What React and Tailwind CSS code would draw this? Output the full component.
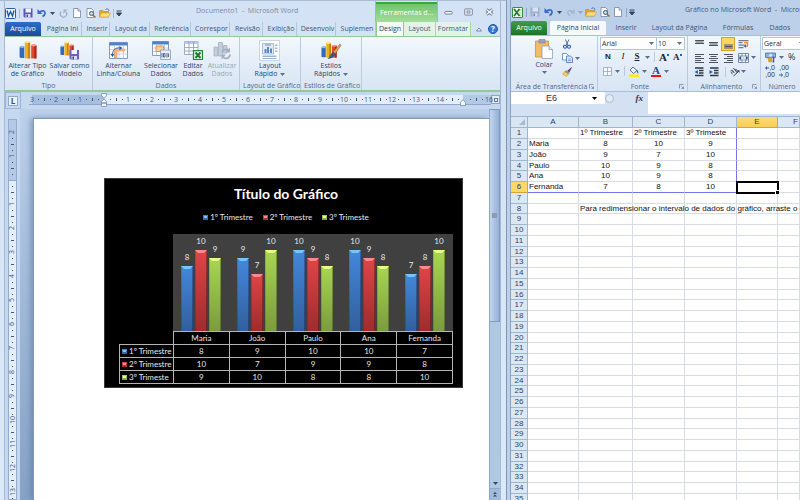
import clsx from 'clsx';

const WORD_TABS = [
  ['Página Ini', 'w-[41px]'],
  ['Inserir', 'w-[28px]'],
  ['Layout da', 'w-[40px]'],
  ['Referência', 'w-[41px]'],
  ['Correspor', 'w-[39px]'],
  ['Revisão', 'w-[33px]'],
  ['Exibição', 'w-[34px]'],
  ['Desenvolv', 'w-[39px]'],
  ['Suplemen', 'w-[40px]'],
];

const EXCEL_TABS = [
  ['Inserir', 'w-[36px]'],
  ['Layout da Página', 'w-[71px]'],
  ['Fórmulas', 'w-[46px]'],
  ['Dados', 'w-[38px]'],
];

const SERIES = [
  { name: '1º Trimestre', bar: 'bg-linear-to-b from-[#4488dd] to-[#315f9d]', tip: 'bg-[#7cc0ff]' },
  { name: '2º Trimestre', bar: 'bg-linear-to-b from-[#e04545] to-[#9d2d2d]', tip: 'bg-[#ff8a8a]' },
  { name: '3º Trimeste', bar: 'bg-linear-to-b from-[#a9d653] to-[#7b9c3b]', tip: 'bg-[#e6ff86]' },
];

const SCORES = [
  { name: 'Maria', values: [8, 10, 9] },
  { name: 'João', values: [9, 7, 10] },
  { name: 'Paulo', values: [10, 9, 8] },
  { name: 'Ana', values: [10, 9, 8] },
  { name: 'Fernanda', values: [7, 8, 10] },
];

const COLUMNS = ['A', 'B', 'C', 'D', 'E', 'F'];
const ROWS = Array.from({ length: 36 }, (_, i) => i + 1);

/* ---------- small icons ---------- */

function Caret({ className = 'text-[#3c4c63]' }) {
  return (
    <svg viewBox="0 0 5 3" className={clsx('h-[3px] w-[5px] shrink-0', className)}>
      <path d="M0 0h5L2.500 3z" fill="currentColor" />
    </svg>
  );
}

function WordLogo() {
  return (
    <svg viewBox="0 0 22 22" className="size-[11px]">
      <rect x="1" y="1" width="20" height="20" rx="2" fill="#eaf2fc" stroke="#2a5da8" strokeWidth="2" />
      <path d="M4 5l3 11 4-9 4 9 3-11" fill="none" stroke="#1f52a0" strokeWidth="2.600" />
    </svg>
  );
}

function ExcelLogo() {
  return (
    <svg viewBox="0 0 22 22" className="size-[11px]">
      <rect x="1" y="1" width="20" height="20" rx="1" fill="#f2faf0" stroke="#3b8d3f" strokeWidth="2" />
      <path d="M14 4h5v4h-5zM14 10h5v3h-5zM14 15h5v3h-5z" fill="#b8ddb4" />
      <path d="M4 4l11 14M15 4L4 18" stroke="#1d7a2c" strokeWidth="3.400" />
    </svg>
  );
}

function SaveIcon({ faded }) {
  return (
    <svg viewBox="0 0 20 20" className={clsx('size-[10px]', faded && 'opacity-60')}>
      <path d="M1 1h18v18H3l-2-2z" fill={faded ? '#8a9cbd' : '#5b55b8'} />
      <path d="M5 1h11v8H5z" fill="#eef3fb" />
      <path d="M5 12h10v7H5z" fill="#d5def0" />
      <path d="M7 13h3v5H7z" fill="#44508f" />
    </svg>
  );
}

function UndoIcon() {
  return (
    <svg viewBox="0 0 20 20" className="size-[10px]">
      <path d="M6 8c6-5 11-1 10 3-.5 3-3 5-5 6" fill="none" stroke="#3a69c4" strokeWidth="3.400" />
      <path d="M1 2v10h10z" fill="#3a69c4" />
    </svg>
  );
}

function RepeatIcon() {
  return (
    <svg viewBox="0 0 20 20" className="size-[9px]">
      <path d="M5 6a7 7 0 1 0 10 0" fill="none" stroke="#a3b1c5" strokeWidth="3" />
      <path d="M19 1h-9v9z" fill="#a3b1c5" />
    </svg>
  );
}

function RedoIcon() {
  return (
    <svg viewBox="0 0 20 20" className="size-[9px]">
      <path d="M14 8C8 3 3 7 4 11c.5 3 3 5 5 6" fill="none" stroke="#a3b4cd" strokeWidth="3" />
      <path d="M19 2v10H9z" fill="#a3b4cd" />
    </svg>
  );
}

function PageIcon() {
  return (
    <svg viewBox="0 0 16 20" className="h-[10px] w-[8px]">
      <path d="M1 1h9l5 5v13H1z" fill="#fff" stroke="#6f7f99" strokeWidth="1.500" />
      <path d="M10 1v5h5" fill="#dce5f2" stroke="#6f7f99" strokeWidth="1.500" />
    </svg>
  );
}

function PreviewIcon() {
  return (
    <svg viewBox="0 0 20 20" className="size-[10px]">
      <path d="M2 1h9l4 4v14H2z" fill="#fff" stroke="#6f7f99" strokeWidth="1.500" />
      <circle cx="11" cy="11" r="4" fill="#b9dcf5" stroke="#47566e" strokeWidth="2" />
      <path d="M14 14l5 5" stroke="#a96b2a" strokeWidth="3" />
    </svg>
  );
}

function FolderIcon() {
  return (
    <svg viewBox="0 0 24 20" className="h-[10px] w-[12px]">
      <path d="M1 5h7l2 2h9v11H1z" fill="#e0a42e" stroke="#b57f22" />
      <path d="M5 10h18l-4 8H1z" fill="#ffdc7a" stroke="#c8922e" />
      <path d="M13 3c4-3 7 0 7 3" fill="none" stroke="#3c70c0" strokeWidth="2" />
    </svg>
  );
}

function QatMore() {
  return (
    <svg viewBox="0 0 6 7" className="h-[7px] w-[6px]">
      <path d="M0.500 1h5M0.500 3h5L3 6z" fill="#33445c" stroke="#33445c" />
    </svg>
  );
}

function ToolButton({ label, className, children }) {
  return (
    <button type="button" aria-label={label} className={clsx('flex shrink-0 items-center justify-center', className)}>
      {children}
    </button>
  );
}

/* ---------- ribbon drawings ---------- */

function Columns3D() {
  return (
    <>
      <path d="M1 14l3-2h6v22H4l-3-1z" fill="#2f6cc0" />
      <ellipse cx="5.500" cy="13" rx="4.500" ry="2" fill="#8dbaf0" />
      <path d="M11 4h10v31H11z" fill="#f0b01e" />
      <path d="M17 4h4v31h-4z" fill="#c9820f" />
      <ellipse cx="16" cy="4" rx="5" ry="2.200" fill="#ffe48a" />
      <path d="M23 10h10v25H23z" fill="#e2492c" />
      <path d="M29 10h4v25h-4z" fill="#a92a18" />
      <ellipse cx="28" cy="10" rx="5" ry="2.200" fill="#ff9b80" />
    </>
  );
}

function ChartTypeIcon() {
  return (
    <svg viewBox="0 0 34 38" className="h-[20px] w-[18px]">
      <Columns3D />
    </svg>
  );
}

function SaveTemplateIcon() {
  return (
    <svg viewBox="0 0 40 38" className="h-[19px] w-[20px]">
      <g transform="scale(.82)">
        <Columns3D />
      </g>
      <path d="M19 18h19v19H21l-2-2z" fill="#6b62bd" />
      <path d="M23 18h11v8H23z" fill="#f2f5fb" />
      <path d="M23 30h11v7H23z" fill="#d5dcee" />
      <path d="M25 31h3v6h-3z" fill="#45458f" />
    </svg>
  );
}

function SwitchRowIcon() {
  return (
    <svg viewBox="0 0 38 34" className="h-[17px] w-[19px]">
      <path d="M1 1h36v32H1z" fill="#fff" stroke="#7f9cc4" strokeWidth="2" />
      <path d="M1 1h36v6H1z" fill="#4f82cc" />
      <path d="M2 15h34M2 24h34M11 7v25M20 7v25M29 7v25" stroke="#b5c8e2" strokeWidth="1.500" />
      <path d="M11 14h20v4H16v14h-5z" fill="#f9b77c" stroke="#e98b3c" />
      <path d="M7 26c0-10 5-15 15-14" fill="none" stroke="#2c5ba6" strokeWidth="2" />
      <path d="M21 8l6 4-6 4zM3 24h8l-4 6z" fill="#2c5ba6" />
    </svg>
  );
}

function SelectDataIcon() {
  return (
    <svg viewBox="0 0 38 38" className="size-[19px]">
      <path d="M1 1h32v28H1z" fill="#fff" stroke="#7f9cc4" strokeWidth="2" />
      <path d="M1 1h32v6H1z" fill="#4f82cc" />
      <path d="M2 14h30M2 21h30M9 8v20M17 8v20M25 8v20" stroke="#a9bfdd" strokeWidth="1.500" />
      <path d="M8 10h15v11H8z" fill="#fbd0a8" stroke="#ea8d3c" strokeWidth="2" />
      <path d="M17 18h20v19H17z" fill="#e9eff8" stroke="#7f93b3" strokeWidth="1.500" />
      <path d="M20 24v9M23 25h3v7h-3zM30 24v9M33 25v7" fill="none" stroke="#54698c" strokeWidth="2" />
    </svg>
  );
}

function EditDataIcon() {
  return (
    <svg viewBox="0 0 38 38" className="size-[19px]">
      <path d="M1 1h27v26H1z" fill="#fff" stroke="#7d92b2" strokeWidth="1.500" />
      <path d="M1 1h27v5H1z" fill="#b9cae2" />
      <path d="M1 13h27M1 20h27M10 1v26M19 1v26" stroke="#8397b5" strokeWidth="1.500" />
      <path d="M19 19h18v18H19z" fill="#eaf6e6" stroke="#2c8139" strokeWidth="2.500" />
      <path d="M23 23l10 11M33 23L23 34" stroke="#1d7a2c" strokeWidth="4" />
    </svg>
  );
}

function RefreshDataIcon() {
  return (
    <svg viewBox="0 0 38 38" className="size-[19px]">
      <path d="M2 12h7v18H2zM11 3h8v27h-8zM21 9h7v15h-7z" fill="#c5cedb" stroke="#a3afc0" strokeWidth="1.500" />
      <path d="M18 22a8 8 0 0 1 13-3M34 27a8 8 0 0 1-14 5" fill="none" stroke="#a3afc0" strokeWidth="3.500" />
      <path d="M34 13v10H24zM17 37V27h9z" fill="#a3afc0" />
    </svg>
  );
}

function QuickLayoutIcon() {
  return (
    <svg viewBox="0 0 42 42" className="size-[21px]">
      <path d="M1 1h40v40H1z" fill="#fff" stroke="#b8c9e0" strokeWidth="1.500" />
      <path d="M7 7h22v21H7z" fill="#e4ecf8" stroke="#8ea8d0" strokeWidth="1.500" />
      <path d="M12 9h12v2H12z" fill="#6a8cc2" />
      <path d="M11 18h4v8h-4zM16 14h4v12h-4zM22 17h4v9h-4z" fill="#5d86c5" />
      <path d="M32 9h5v3h-5zM32 15h5v3h-5zM32 21h5v3h-5zM7 31h28v3H7zM7 36h28v2H7z" fill="#9db4d8" />
    </svg>
  );
}

function QuickStylesIcon() {
  return (
    <svg viewBox="0 0 42 38" className="h-[19px] w-[21px]">
      <g transform="scale(.95)">
        <Columns3D />
      </g>
      <path d="M38 6L24 22l4 4L40 9z" fill="#d9a25c" stroke="#8c5a24" />
      <path d="M24 21l5 5-4 5c-4 4-9 5-12 4 5-3 6-9 11-14z" fill="#3e567e" />
    </svg>
  );
}

function PasteIcon() {
  return (
    <svg viewBox="0 0 36 40" className="h-[20px] w-[18px]">
      <path d="M1 4h26v32H1z" fill="#f2bd62" stroke="#c98f36" strokeWidth="1.500" />
      <path d="M8 1h12v7H8z" fill="#9aa5b5" stroke="#66748a" />
      <path d="M14 14h14l7 7v18H14z" fill="#fff" stroke="#8a98b0" strokeWidth="1.500" />
      <path d="M28 14v7h7" fill="#dce5f2" stroke="#8a98b0" strokeWidth="1.500" />
    </svg>
  );
}

function CutIcon() {
  return (
    <svg viewBox="0 0 16 20" className="h-[10px] w-[8px]">
      <path d="M5 1l5 12M12 1L6 13" stroke="#5b6f8f" strokeWidth="2" />
      <circle cx="4" cy="15.500" r="3" fill="none" stroke="#2c5cb0" strokeWidth="2.200" />
      <circle cx="12" cy="15.500" r="3" fill="none" stroke="#2c5cb0" strokeWidth="2.200" />
    </svg>
  );
}

function CopyIcon() {
  return (
    <svg viewBox="0 0 22 20" className="h-[10px] w-[11px]">
      <path d="M1 1h8l4 4v9H1z" fill="#fff" stroke="#4d77bb" strokeWidth="1.500" />
      <path d="M9 6h8l4 4v9H9z" fill="#dbe8fa" stroke="#3e6ab3" strokeWidth="1.500" />
      <path d="M12 12h6M12 15h6" stroke="#3e6ab3" />
    </svg>
  );
}

function BrushIcon() {
  return (
    <svg viewBox="0 0 20 20" className="size-[10px]">
      <path d="M19 1l-8 7 3 3z" fill="#5a4a78" stroke="#5a4a78" strokeWidth="1.500" />
      <path d="M9 6l6 6-3 3-7-5z" fill="#8a93a5" />
      <path d="M5 9l8 6-4 4-8-5z" fill="#f6cf5a" stroke="#c29022" />
    </svg>
  );
}

function LinesIcon({ rows }) {
  return (
    <svg viewBox="0 0 18 20" className="h-[10px] w-[9px]">
      {rows.map(([x, y, w]) => (
        <path key={y} d={`M${x} ${y}h${w}`} stroke="#4d545e" strokeWidth="2" />
      ))}
    </svg>
  );
}

const VALIGN_TOP = [[0, 3, 18], [1, 6, 16], [0, 9, 18]];
const VALIGN_MID = [[0, 7, 18], [1, 10, 16], [0, 13, 18]];
const VALIGN_BOTTOM = [[0, 12, 18], [1, 15, 16], [0, 18, 18]];
const ALIGN_LEFT = [[0, 3, 18], [0, 7, 12], [0, 11, 18], [0, 15, 12], [0, 19, 18]];
const ALIGN_CENTER = [[0, 3, 18], [3, 7, 12], [0, 11, 18], [3, 15, 12], [0, 19, 18]];
const ALIGN_RIGHT = [[0, 3, 18], [6, 7, 12], [0, 11, 18], [6, 15, 12], [0, 19, 18]];

function WrapIcon() {
  return (
    <svg viewBox="0 0 22 20" className="h-[10px] w-[11px]">
      <path d="M1 3h20M1 7h8M1 12h12M1 17h10" stroke="#6c7a90" strokeWidth="2.500" />
      <path d="M12 7h7v7h-5" fill="none" stroke="#d98a3d" strokeWidth="2.500" />
      <path d="M16 10v8l-5-4z" fill="#3a69c4" />
    </svg>
  );
}

function MergeIcon() {
  return (
    <svg viewBox="0 0 22 20" className="h-[10px] w-[11px]">
      <path d="M1 1h20v18H1zM1 6h20M1 14h20M8 1v5M15 1v5M8 14v5M15 14v5" fill="#fff" stroke="#4f6b95" strokeWidth="1.500" />
      <path d="M2 10l4-3v6zM20 10l-4-3v6zM9 10h4" fill="#2b4d86" stroke="#2b4d86" />
    </svg>
  );
}

function IndentIcon({ inward }) {
  return (
    <svg viewBox="0 0 20 20" className="size-[10px]">
      <path d="M2 2h17M10 7h9M10 12h9M2 17h17" stroke="#2e3846" strokeWidth="2.600" />
      <path d={inward ? 'M1 6l7 4-7 4z' : 'M8 6l-7 4 7 4z'} fill="#2d5fb5" />
    </svg>
  );
}

function BordersIcon() {
  return (
    <svg viewBox="0 0 18 18" className="size-[9px]">
      <path d="M1 1h16v16H1zM9 1v16M1 9h16" fill="#f7fafd" stroke="#93a0b4" strokeWidth="1.500" />
    </svg>
  );
}

function FillIcon() {
  return (
    <svg viewBox="0 0 20 22" className="h-[11px] w-[10px]">
      <path d="M8 2l8 7-7 6-7-7z" fill="#eaf0f8" stroke="#4f6380" strokeWidth="1.800" />
      <path d="M16 8c3 2 3 5 2 7-2-1-3-4-2-7z" fill="#2f64bb" />
      <path d="M0 17h20v5H0z" fill="#ffee00" />
    </svg>
  );
}

function CurrencyIcon() {
  return (
    <svg viewBox="0 0 22 22" className="size-[11px]">
      <path d="M1 2h20v9H1z" fill="#8fb0df" stroke="#3f69ad" strokeWidth="1.500" />
      <circle cx="11" cy="6.500" r="3" fill="#dbe8fa" />
      <path d="M5 13h9M6 16h8M7 19h8" stroke="#d9a12c" strokeWidth="2.600" />
      <path d="M17 9v12" stroke="#2d5fb5" strokeWidth="3" />
    </svg>
  );
}

function DialogLauncher() {
  return (
    <svg viewBox="0 0 10 10" className="size-[5px]">
      <path d="M1 9V1h8M5 5l4 4M9 5v4H5" fill="none" stroke="#7588a3" strokeWidth="1.600" />
    </svg>
  );
}

/* ---------- ribbon building blocks ---------- */

function RibbonGroup({ label, className, launcher, children }) {
  return (
    <section aria-label={label} className={clsx('flex shrink-0 flex-col border-r border-[#b9cbe0] bg-linear-to-b from-[#f3f8fd] via-[#e4edf8] to-[#d8e5f4]', className)}>
      <div className="flex flex-1 justify-center">{children}</div>
      <div className="flex h-[9px] items-center px-[3px] leading-[9px] text-[#52688b]">
        <span className="flex-1 text-center whitespace-nowrap">{label}</span>
        {launcher && <DialogLauncher />}
      </div>
    </section>
  );
}

function BigButton({ icon, lines, caret, disabled, className }) {
  return (
    <button
      type="button"
      disabled={disabled}
      className={clsx('flex shrink-0 flex-col items-center pt-[2px] leading-[8px]', disabled ? 'text-[#9aa7b8]' : 'text-[#2d4468]', className)}
    >
      <span className="flex h-[22px] items-center">{icon}</span>
      <span className="mt-[1px] whitespace-nowrap">{lines[0]}</span>
      <span className="flex items-center gap-[3px] whitespace-nowrap">
        {lines[1]}
        {caret && <Caret className="text-[#5c6f8c]" />}
      </span>
    </button>
  );
}

/* ---------- Word ---------- */

function WordTitleBar() {
  return (
    <header className="flex h-[21px] items-center">
      <div className="flex w-[191px] items-center pt-[3px]">
        <WordLogo />
        <span className="mx-[3px] h-[9px] w-px bg-[#a9b9cf]" />
        <ToolButton label="Salvar"><SaveIcon /></ToolButton>
        <ToolButton label="Desfazer" className="ml-[4px] gap-[3px]"><UndoIcon /><Caret /></ToolButton>
        <ToolButton label="Repetir" className="ml-[4px]"><RepeatIcon /></ToolButton>
        <ToolButton label="Novo" className="ml-[5px]"><PageIcon /></ToolButton>
        <ToolButton label="Visualizar impressão" className="ml-[5px]"><PreviewIcon /></ToolButton>
        <ToolButton label="Abrir" className="ml-[3px]"><FolderIcon /></ToolButton>
        <span className="mx-[2px] h-[9px] w-px bg-[#a9b9cf]" />
        <ToolButton label="Personalizar"><QatMore /></ToolButton>
      </div>
      <h1 className="flex-1 whitespace-pre text-[#7a8ca6]">Documento1  -  Microsoft Word</h1>
      <div className="flex h-full w-[63px] flex-col border-x border-[#8ccf83]">
        <div className="mt-[1px] h-[2px] bg-[#2fae3c]" />
        <div className="flex flex-1 items-center justify-center bg-linear-to-b from-[#6fc56c] to-[#a5dc9c] text-white">
          Ferramentas d...
        </div>
      </div>
      <div className="flex w-[62px] items-center justify-around text-[#66758c]">
        <ToolButton label="Minimizar">
          <svg viewBox="0 0 18 14" className="h-[7px] w-[9px]">
            <rect x="1.500" y="7" width="15" height="5" rx="2" fill="#fff" stroke="currentColor" strokeWidth="1.800" />
          </svg>
        </ToolButton>
        <ToolButton label="Maximizar">
          <svg viewBox="0 0 18 16" className="h-[8px] w-[9px]">
            <rect x="1.500" y="2" width="15" height="12" rx="1" fill="#fff" stroke="currentColor" strokeWidth="1.800" />
            <rect x="6" y="6" width="6" height="4" fill="none" stroke="currentColor" strokeWidth="1.800" />
          </svg>
        </ToolButton>
        <ToolButton label="Fechar">
          <svg viewBox="0 0 18 16" className="h-[8px] w-[9px]">
            <path d="M3 3l12 10M15 3L3 13" stroke="currentColor" strokeWidth="6" />
            <path d="M3 3l12 10M15 3L3 13" stroke="#fff" strokeWidth="2.800" />
          </svg>
        </ToolButton>
      </div>
    </header>
  );
}

function WordTabs() {
  return (
    <nav className="flex h-[14px] text-[#3f5577]">
      <button type="button" className="w-[36px] shrink-0 rounded-t-[2px] bg-linear-to-b from-[#2f6cc9] to-[#1d4a9c] text-white">
        Arquivo
      </button>
      {WORD_TABS.map(([name, width]) => (
        <button key={name} type="button" className={clsx('shrink-0 overflow-hidden border-r border-[#b5c6dc] pl-[3px] whitespace-nowrap', width)}>
          {name}
        </button>
      ))}
      <button type="button" className="w-[28px] shrink-0 border-x border-[#8ccf83] bg-[#f6fbf6] text-[#2d4468]">
        Design
      </button>
      <button type="button" className="w-[32px] shrink-0 border-r border-[#a5dc9c] bg-[#e4f3ea]">
        Layout
      </button>
      <button type="button" className="w-[35px] shrink-0 border-r border-[#a5dc9c] bg-[#e4f3ea]">
        Formatar
      </button>
      <div className="flex flex-1 items-center justify-end gap-[6px] pr-[2px]">
        <ToolButton label="Minimizar a faixa">
          <svg viewBox="0 0 12 10" className="h-[5px] w-[6px]">
            <path d="M1 8l5-6 5 6z" fill="#fff" stroke="#5c6f8c" strokeWidth="1.600" />
          </svg>
        </ToolButton>
        <button type="button" className="size-[10px] rounded-full border border-[#1f55ab] bg-[#3a78d6] text-[8px] leading-[8px] font-bold text-white">
          ?
        </button>
      </div>
    </nav>
  );
}

function WordRibbon() {
  return (
    <div className="flex h-[56px] border-t border-b-2 border-[#93c99a] bg-linear-to-b from-[#f3f8fd] via-[#e4edf8] to-[#d8e5f4]">
      <RibbonGroup label="Tipo" className="w-[88px]">
        <BigButton icon={<ChartTypeIcon />} lines={['Alterar Tipo', 'de Gráfico']} className="w-[42px]" />
        <BigButton icon={<SaveTemplateIcon />} lines={['Salvar como', 'Modelo']} className="w-[42px]" />
      </RibbonGroup>
      <RibbonGroup label="Dados" className="w-[147px]">
        <BigButton icon={<SwitchRowIcon />} lines={['Alternar', 'Linha/Coluna']} className="w-[48px]" />
        <BigButton icon={<SelectDataIcon />} lines={['Selecionar', 'Dados']} className="w-[37px]" />
        <BigButton icon={<EditDataIcon />} lines={['Editar', 'Dados']} className="w-[27px]" />
        <BigButton icon={<RefreshDataIcon />} lines={['Atualizar', 'Dados']} disabled className="w-[31px]" />
      </RibbonGroup>
      <RibbonGroup label="Layout de Gráfico" className="w-[61px]">
        <BigButton icon={<QuickLayoutIcon />} lines={['Layout', 'Rápido']} caret />
      </RibbonGroup>
      <RibbonGroup label="Estilos de Gráfico" className="w-[61px]">
        <BigButton icon={<QuickStylesIcon />} lines={['Estilos', 'Rápidos']} caret />
      </RibbonGroup>
    </div>
  );
}

function RulerMark({ n, vertical }) {
  const slot = vertical ? 'h-[6px] w-full' : 'h-full w-[6px]';
  return (
    <div className={clsx('flex shrink-0 text-[#41597f]', vertical ? 'w-full flex-col' : 'h-full')}>
      <span className={clsx('flex items-center justify-center leading-[6px]', slot)}>
        <span className={clsx(vertical && '-rotate-90')}>{n || ''}</span>
      </span>
      <span className={clsx('flex items-center justify-center', slot)}><i className="size-px bg-current" /></span>
      <span className={clsx('flex items-center justify-center', slot)}>
        <i className={clsx('bg-current', vertical ? 'h-px w-[3px]' : 'h-[3px] w-px')} />
      </span>
      <span className={clsx('flex items-center justify-center', slot)}><i className="size-px bg-current" /></span>
    </div>
  );
}

function HorizontalRuler() {
  return (
    <div className="flex h-[17px] shrink-0">
      <div className="flex w-[16px] items-center justify-center border border-[#9db5d6] bg-[#c5d8ef]">
        <span className="flex size-[10px] items-center justify-center border border-[#93abcb] bg-[#eaf2fb] text-[8px] leading-[8px] font-bold text-[#3b5278]">
          L
        </span>
      </div>
      <div className="flex min-w-0 flex-1 pt-[3px] pl-[8px]">
        <div className="relative flex h-[10px] min-w-0 flex-1 border-b border-[#8ea8cb] bg-[linear-gradient(to_right,#c5d8ef_3px,#a6bfdf_3px,#a6bfdf_75px,#e4eefa_75px,#e4eefa_434px,#b3c9e6_434px)]">
          {[3, 2, 1, 0, 1, 2, 3, 4, 5, 6, 7, 8, 9, 10, 11, 12, 13, 14, 0].map((n, i) => (
            <RulerMark key={i} n={n} />
          ))}
          <span className="leading-[9px] text-[#41597f]">16</span>
          <svg viewBox="0 0 12 28" className="absolute -top-[2px] left-[72px] h-[14px] w-[6px]">
            <path d="M1 1h10v4l-5 6-5-6zM1 20v-3l5-5 5 5v3zM1 20h10v7H1z" fill="#f2f6fb" stroke="#7287a8" strokeWidth="1.500" />
          </svg>
          <svg viewBox="0 0 12 14" className="absolute top-[4px] left-[431px] h-[7px] w-[6px]">
            <path d="M1 13V7l5-6 5 6v6z" fill="#f2f6fb" stroke="#7287a8" strokeWidth="1.500" />
          </svg>
        </div>
        <div className="flex w-[9px] flex-col items-center">
          <span className="flex size-[9px] items-center justify-center border border-[#8aa2c4] bg-[#e6eef8]">
            <i className="size-[4px] border border-[#62779a]" />
          </span>
        </div>
      </div>
    </div>
  );
}

function VerticalRuler() {
  return (
    <div className="w-[15px] shrink-0 overflow-hidden bg-[#c5d8ef] pt-[10px] pl-[3px]">
      <div className="h-full w-[9px] border border-[#94adcf] bg-[linear-gradient(to_bottom,#b3c9e6_60px,#8ea8cb_60px,#8ea8cb_61px,#e4eefa_61px)] pt-[9px]">
        {[2, 1, 0, 1, 2, 3, 4, 5, 6, 7, 8, 9, 10, 11, 12, 13].map((n, i) => (
          <RulerMark key={i} n={n} vertical />
        ))}
      </div>
    </div>
  );
}

function Swatch({ series }) {
  return (
    <i className={clsx('flex size-[5px] shrink-0 justify-center', series.bar)}>
      <i className={clsx('mt-[1px] h-[2px] w-[3px]', series.tip)} />
    </i>
  );
}

function Chart() {
  return (
    <figure className="mt-[59px] mr-[26px] ml-[70px] h-[210px] border border-[#3a3a3a] bg-black pr-[9px] pl-[14px] font-[Lato,'Noto_Sans',sans-serif] text-[#e6e6e6]">
      <figcaption className="pt-[7px] text-center text-[14px] leading-[16px] font-bold text-white">
        Título do Gráfico
      </figcaption>
      <div className="mt-[10px] flex h-[10px] items-center justify-center gap-[10px] text-[8px] leading-[10px]">
        {SERIES.map((s) => (
          <span key={s.name} className="flex items-center gap-[2px]">
            <Swatch series={s} />
            {s.name}
          </span>
        ))}
      </div>
      <div className="mt-[12px] ml-[54px] flex h-[97px] bg-[#404040]">
        {SCORES.map((row) => (
          <div key={row.name} className="flex flex-1 items-end justify-center gap-[2px]">
            {row.values.map((v, i) => (
              <div key={i} className="flex w-[12px] flex-col items-center text-[8px] leading-[10px]">
                <span className="mb-[4px]">{v}</span>
                <div className={clsx('flex w-full justify-center shadow-[inset_1px_0_0_#00000022,inset_-1px_0_0_#00000044]', SERIES[i].bar)} style={{ height: Math.round(v * 8.1) }}>
                  <i className={clsx('h-[3px] w-full [clip-path:polygon(0_0,100%_0,75%_100%,25%_100%)]', SERIES[i].tip)} />
                </div>
              </div>
            ))}
          </div>
        ))}
      </div>
      <table className="w-full table-fixed border-collapse text-center text-[8px] leading-[12px]">
        <thead>
          <tr className="h-[13px]">
            <td className="w-[54px] p-0" />
            {SCORES.map((row) => (
              <th key={row.name} scope="col" className="border border-[#b4b4b4] p-0 font-normal">{row.name}</th>
            ))}
          </tr>
        </thead>
        <tbody>
          {SERIES.map((s, i) => (
            <tr key={s.name} className="h-[13px]">
              <th scope="row" className="border border-[#b4b4b4] p-0 font-normal">
                <span className="flex items-center gap-[2px] pl-[2px] whitespace-nowrap"><Swatch series={s} />{s.name}</span>
              </th>
              {SCORES.map((row) => (
                <td key={row.name} className="border border-[#b4b4b4] p-0">{row.values[i]}</td>
              ))}
            </tr>
          ))}
        </tbody>
      </table>
    </figure>
  );
}

function WordScrollbar() {
  return (
    <div className="flex w-[11px] shrink-0 flex-col border-l border-[#8ea8cb] bg-[#b1c8e3]">
      <div className="flex h-[213px] items-center justify-center border border-l-0 border-[#7f9bc2] bg-linear-to-r from-[#c3d6ee] to-[#94b0d4]">
        <i className="h-[5px] w-[5px] bg-[#8d9bb0]" />
      </div>
      <div className="flex-1" />
      <div className="flex h-[10px] items-center justify-center"><Caret className="text-[#34486a]" /></div>
      <div className="flex h-[12px] items-start justify-center border-t border-[#8ea8cb] bg-[#a3bbdb] pt-[3px]">
        <svg viewBox="0 0 8 10" className="h-[5px] w-[4px]">
          <path d="M0 4l4-4 4 4zM0 9l4-4 4 4z" fill="#34486a" />
        </svg>
      </div>
    </div>
  );
}

function WordWindow() {
  return (
    <div className="flex min-w-0 flex-col overflow-hidden border-t border-r border-t-[#a9bbd2] border-r-[#8196b3] bg-linear-to-b from-[#d3e2f4] to-[#dce9f7] pr-[5px]">
      <div className="ml-[4px] flex min-h-0 flex-1 flex-col border-x border-[#a3b9d6]">
        <WordTitleBar />
        <WordTabs />
        <WordRibbon />
        <main className="flex min-h-0 flex-1 flex-col bg-[#c5d8ef]">
          <HorizontalRuler />
          <div className="flex min-h-0 flex-1">
            <VerticalRuler />
            <div className="min-w-0 flex-1 overflow-hidden bg-linear-to-b from-[#bdd1eb] to-[#86a2c6] pt-[9px] pl-[13px]">
              <div className="h-full border-t border-l border-[#8798b0] bg-white shadow-[-2px_0_6px_#4f6f9899]">
                <Chart />
              </div>
            </div>
            <WordScrollbar />
          </div>
        </main>
      </div>
    </div>
  );
}

/* ---------- Excel ---------- */

function ExcelTitleBar() {
  return (
    <header className="flex h-[21px] items-center">
      <div className="flex w-[174px] shrink-0 items-center pt-[3px] pl-[1px]">
        <ExcelLogo />
        <span className="mx-[3px] h-[9px] w-px bg-[#8fa6c6]" />
        <ToolButton label="Salvar"><SaveIcon faded /></ToolButton>
        <ToolButton label="Desfazer" className="ml-[4px] gap-[3px]"><UndoIcon /><Caret /></ToolButton>
        <ToolButton label="Refazer" className="ml-[4px] gap-[3px]"><RedoIcon /><Caret className="text-[#93a5c0]" /></ToolButton>
        <ToolButton label="Abrir" className="ml-[2px]"><FolderIcon /></ToolButton>
        <ToolButton label="Visualizar impressão" className="ml-[3px]"><PreviewIcon /></ToolButton>
        <ToolButton label="Novo" className="ml-[4px]"><PageIcon /></ToolButton>
        <span className="mr-[2px] ml-[4px] h-[9px] w-px bg-[#8fa6c6]" />
        <ToolButton label="Personalizar"><QatMore /></ToolButton>
      </div>
      <h1 className="whitespace-pre text-[#44597a]">Gráfico no Microsoft Word  -  Microsoft Excel</h1>
    </header>
  );
}

function ExcelTabs() {
  return (
    <nav className="flex h-[14px] text-[#3f5577]">
      <button type="button" className="w-[36px] shrink-0 rounded-t-[2px] bg-linear-to-b from-[#3d9e45] to-[#1b7428] text-white">
        Arquivo
      </button>
      <button type="button" className="ml-[3px] w-[56px] shrink-0 rounded-t-[2px] bg-[#f6fafe] text-[#2d4468]">
        Página Inicial
      </button>
      <div className="w-[2px] shrink-0" />
      {EXCEL_TABS.map(([name, width]) => (
        <button key={name} type="button" className={clsx('shrink-0 whitespace-nowrap', width)}>{name}</button>
      ))}
    </nav>
  );
}

function Combo({ label, value, className }) {
  return (
    <div className={clsx('flex h-[13px] shrink-0 items-center border border-[#b4c6dd] bg-white pr-[2px]', className)}>
      <select aria-label={label} defaultValue={value} className="min-w-0 flex-1 appearance-none bg-transparent pl-[1px] text-[7px] leading-[11px] text-[#1e2b3e] outline-none">
        <option>{value}</option>
      </select>
      <Caret className="text-[#5c6f8c]" />
    </div>
  );
}

function ExcelRibbon() {
  return (
    <div className="flex h-[57px] border-y border-[#a9bdd8] bg-[#e4edf8]">
      <RibbonGroup label="Área de Transferência" className="w-[87px]" launcher>
        <button type="button" className="flex w-[36px] flex-col items-center pt-[3px] leading-[8px] text-[#2d4468]">
          <PasteIcon />
          <span className="mt-[2px] mb-[2px]">Colar</span>
          <Caret className="text-[#5c6f8c]" />
        </button>
        <div className="flex w-[20px] flex-col items-start gap-[4px] pt-[3px]">
          <ToolButton label="Recortar" className="ml-[1px]"><CutIcon /></ToolButton>
          <ToolButton label="Copiar" className="gap-[2px]"><CopyIcon /><Caret className="text-[#5c6f8c]" /></ToolButton>
          <ToolButton label="Pincel"><BrushIcon /></ToolButton>
        </div>
      </RibbonGroup>
      <RibbonGroup label="Fonte" className="w-[90px]" launcher>
        <div className="flex w-full flex-col pt-[1px] pl-[2px]">
          <div className="flex">
            <Combo label="Fonte" value="Arial" className="w-[57px]" />
            <Combo label="Tamanho" value="10" className="w-[28px] border-l-0" />
          </div>
          <div className="flex h-[14px] items-center pl-[2px] font-['Liberation_Serif',serif] text-[9px] text-[#1c2430]">
            <button type="button" className="w-[12px] font-['Liberation_Sans',sans-serif] text-[8px] font-black">N</button>
            <button type="button" className="ml-[3px] w-[12px] italic">I</button>
            <button type="button" className="ml-[2px] w-[12px] font-bold underline">S</button>
            <Caret className="ml-[2px] text-[#5c6f8c]" />
            <span className="mx-[4px] h-[10px] w-px bg-[#b9c9de]" />
            <button type="button" className="flex w-[14px] items-start text-[11px] leading-[11px] font-bold" aria-label="Aumentar fonte">
              A<i className="mt-[2px] size-[2px] bg-[#2d5fb5]" />
            </button>
            <button type="button" className="flex w-[12px] items-start leading-[9px] font-bold" aria-label="Reduzir fonte">
              A<i className="mt-[1px] size-[2px] bg-[#2d5fb5]" />
            </button>
          </div>
          <div className="flex h-[14px] items-center pl-[3px]">
            <ToolButton label="Bordas" className="gap-[3px]"><BordersIcon /><Caret className="text-[#5c6f8c]" /></ToolButton>
            <span className="mx-[4px] h-[10px] w-px bg-[#b9c9de]" />
            <ToolButton label="Preenchimento" className="gap-[3px]"><FillIcon /><Caret className="text-[#5c6f8c]" /></ToolButton>
            <button type="button" aria-label="Cor da fonte" className="ml-[4px] flex items-center gap-[3px]">
              <span className="h-[11px] w-[10px] border-b-2 border-[#f01010] text-center font-['Liberation_Serif',serif] text-[11px] leading-[9px] font-bold text-[#24498c]">A</span>
              <Caret className="text-[#5c6f8c]" />
            </button>
          </div>
        </div>
      </RibbonGroup>
      <RibbonGroup label="Alinhamento" className="w-[73px]" launcher>
        <div className="flex w-full flex-col pl-[4px]">
          <div className="flex h-[15px] items-center">
            <ToolButton label="Alinhar em cima" className="w-[14px]"><LinesIcon rows={VALIGN_TOP} /></ToolButton>
            <ToolButton label="Alinhar no meio" className="w-[15px]"><LinesIcon rows={VALIGN_MID} /></ToolButton>
            <ToolButton label="Alinhar embaixo" className="h-[14px] w-[14px] border border-[#d5a22f] bg-[#ffd75e]"><LinesIcon rows={VALIGN_BOTTOM} /></ToolButton>
            <ToolButton label="Quebrar texto" className="w-[17px]"><WrapIcon /></ToolButton>
          </div>
          <div className="flex h-[13px] items-center">
            <ToolButton label="Esquerda" className="w-[14px]"><LinesIcon rows={ALIGN_LEFT} /></ToolButton>
            <ToolButton label="Centro" className="w-[15px]"><LinesIcon rows={ALIGN_CENTER} /></ToolButton>
            <ToolButton label="Direita" className="w-[14px]"><LinesIcon rows={ALIGN_RIGHT} /></ToolButton>
            <ToolButton label="Mesclar" className="ml-[3px] gap-[2px]"><MergeIcon /><Caret className="text-[#5c6f8c]" /></ToolButton>
          </div>
          <div className="flex h-[15px] items-center">
            <ToolButton label="Diminuir recuo" className="w-[14px]"><IndentIcon /></ToolButton>
            <ToolButton label="Aumentar recuo" className="w-[15px]"><IndentIcon inward /></ToolButton>
            <span className="mx-[4px] h-[10px] w-px bg-[#b9c9de]" />
            <ToolButton label="Orientação" className="gap-[1px]">
              <svg viewBox="0 0 20 20" className="size-[10px]">
                <path d="M1 8c3-3 6-1 7 4M7 10c-4-2-6 2-2 4M7 2l6 8M10 6c4-2 6 2 3 5" fill="none" stroke="#39424f" strokeWidth="2" />
                <path d="M7 18L18 8" stroke="#39424f" strokeWidth="2" />
                <path d="M19 6v6l-5-5z" fill="#39424f" />
              </svg>
              <Caret className="text-[#5c6f8c]" />
            </ToolButton>
          </div>
        </div>
      </RibbonGroup>
      <RibbonGroup label="Número" className="w-[48px]" launcher>
        <div className="flex w-full flex-col pt-[1px] pl-[1px] text-[#2b3545]">
          <Combo label="Formato" value="Geral" className="w-[45px]" />
          <div className="flex h-[14px] items-center gap-[3px] pl-[3px]">
            <ToolButton label="Moeda" className="gap-[3px]"><CurrencyIcon /><Caret className="text-[#5c6f8c]" /></ToolButton>
            <button type="button" className="ml-[1px] text-[9px]">%</button>
          </div>
          <div className="flex h-[14px] items-center gap-[4px] pl-[3px] font-['Liberation_Sans',sans-serif] text-[7px] leading-[7px]">
            <button type="button" aria-label="Aumentar casas decimais" className="flex w-[10px] flex-col items-end">
              <span className="flex items-center">
                <svg viewBox="0 0 8 8" className="size-[4px]"><path d="M0 4l4-4v8zM3 3h5v2H3z" fill="#2d5fb5" /></svg>,0
              </span>
              <span>,00</span>
            </button>
            <button type="button" aria-label="Diminuir casas decimais" className="flex w-[10px] flex-col items-end">
              <span>,00</span>
              <span className="flex items-center">
                <svg viewBox="0 0 8 8" className="size-[4px]"><path d="M8 4L4 0v8zM0 3h5v2H0z" fill="#2d5fb5" /></svg>,0
              </span>
            </button>
          </div>
        </div>
      </RibbonGroup>
    </div>
  );
}

function FormulaBar() {
  return (
    <div className="flex h-[25px] shrink-0 border-b border-[#9fb4d0] bg-[#d3e1f2] font-['Liberation_Sans',Arial,sans-serif]">
      <div className="flex h-[12px] w-[94px] shrink-0 items-center bg-white pr-[8px]">
        <input aria-label="Caixa de nome" defaultValue="E6" className="min-w-0 flex-1 bg-transparent text-center text-[9px] leading-[12px] text-[#2b3545] outline-none" />
        <Caret className="text-black" />
      </div>
      <div className="flex h-[12px] w-[43px] shrink-0 items-center justify-between pr-[5px]">
        <i className="size-[9px] rounded-full border border-[#a9bcd6] bg-[#e2ebf6]" />
        <button type="button" className="font-['Liberation_Serif',serif] text-[9px] leading-[10px] font-bold text-[#2b3a55] italic">fx</button>
      </div>
      <input aria-label="Barra de fórmulas" className="mb-[2px] min-w-0 flex-1 bg-white outline-none" />
    </div>
  );
}

function cellText(col, row) {
  if (row === 1) return ['', ...SERIES.map((s) => s.name)][col] || '';
  if (row === 8 && col === 1) {
    return 'Para redimensionar o intervalo de dados do gráfico, arraste o canto inferior direito do intervalo.';
  }
  const score = SCORES[row - 2];
  if (!score || col > 3) return '';
  return col === 0 ? score.name : score.values[col - 1];
}

function Sheet() {
  return (
    <table className="w-full table-fixed border-separate border-spacing-0 font-['Liberation_Sans',Arial,sans-serif] text-[8px] leading-[10px] text-[#111]">
      <colgroup>
        <col className="w-[17px]" />
        <col className="w-[51px]" />
        <col className="w-[54px]" />
        <col className="w-[52px]" />
        <col className="w-[52px]" />
        <col className="w-[41px]" />
        <col />
      </colgroup>
      <thead>
        <tr>
          <td className="border-r border-b border-[#9eb6ce] bg-[#d9e5f3] p-0">
            <svg viewBox="0 0 10 10" className="mr-[2px] ml-auto size-[6px]"><path d="M10 0v10H0z" fill="#a9bbd2" /></svg>
          </td>
          {COLUMNS.map((c) => (
            <th key={c} scope="col" className={clsx('border-r border-b p-0 font-normal text-[#2c4468]', c === 'E' ? 'border-[#d8a33c] bg-linear-to-b from-[#fbdc7c] to-[#f8cf52]' : 'border-[#9eb6ce] bg-[#dce7f4]', c === 'F' && 'pl-[14px]')}>
              {c}
            </th>
          ))}
        </tr>
      </thead>
      <tbody>
        {ROWS.map((r) => (
          <tr key={r} className="nth-[4n]:leading-[9px]">
            <th scope="row" className={clsx('border-r border-b p-0 font-normal text-[#2c4468]', r === 6 ? 'border-[#d8a33c] bg-[#fbd869]' : 'border-[#9eb6ce] bg-[#dce7f4]')}>
              {r}
            </th>
            {COLUMNS.map((c, i) => (
              <td
                key={c}
                className={clsx(
                  'border-r border-b p-0 whitespace-nowrap',
                  i === 3 && r < 7 ? 'border-r-[#7474ee]' : 'border-r-[#d9dde3]',
                  i < 4 && r === 6 ? 'border-b-[#7474ee]' : 'border-b-[#d9dde3]',
                  i > 0 && r > 1 && r < 7 ? 'text-center' : 'pl-[1px]',
                  c === 'E' && r === 6 && 'relative outline-2 -outline-offset-1 outline-black',
                )}
              >
                {cellText(i, r)}
                {c === 'E' && r === 6 && <i className="absolute -right-[2px] -bottom-[2px] size-[4px] border-t border-l border-white bg-black" />}
              </td>
            ))}
          </tr>
        ))}
      </tbody>
    </table>
  );
}

function ExcelWindow() {
  return (
    <div className="flex min-w-0 flex-col overflow-hidden bg-[#bdd0e9] pl-[3px]">
      <div className="flex min-h-0 flex-1 flex-col overflow-hidden border-l border-[#8aa3c5]">
        <ExcelTitleBar />
        <ExcelTabs />
        <ExcelRibbon />
        <FormulaBar />
        <main className="min-h-0 flex-1 overflow-hidden bg-white">
          <Sheet />
        </main>
      </div>
    </div>
  );
}

export default function App() {
  return (
    <div className="grid h-screen grid-cols-[507fr_293fr] grid-rows-[minmax(0,1fr)] overflow-hidden bg-[#c5d8ef] font-['Open_Sans','Noto_Sans',sans-serif] text-[7px]">
      <WordWindow />
      <ExcelWindow />
    </div>
  );
}
